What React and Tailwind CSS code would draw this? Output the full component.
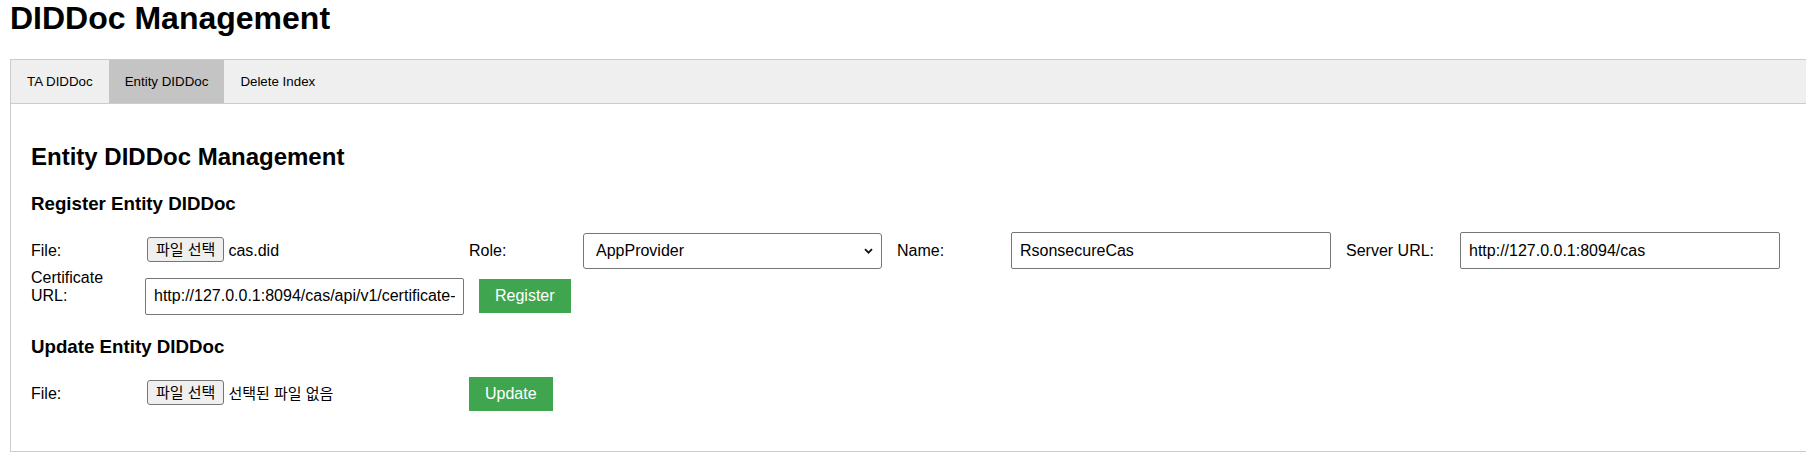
import React from 'react';

const tabs = ['TA DIDDoc', 'Entity DIDDoc', 'Delete Index'];

function Field({ label, children }) {
    return (
        <div className="flex gap-[14px] [align-items:last_baseline]">
            <label className="w-[100px] text-[16px] leading-[18px]">{label}</label>
            {children}
        </div>
    );
}

function FilePicker({ name, nameClass = 'text-[16px]' }) {
    return (
        <div className="w-[309px] pl-[2px] text-[16px] leading-[18px] whitespace-nowrap">
            <span className="inline-block align-[1px] h-[25px] mr-[4px] px-[8px] border border-[#767676] rounded-[3px] bg-[#efefef] text-[15px] leading-[23px]">
                파일 선택
            </span>
            <span className={nameClass}>{name}</span>
        </div>
    );
}

function TextInput({ value, width = 'w-[320px]' }) {
    return (
        <input
            readOnly
            value={value}
            className={`${width} h-[37px] px-[8px] border border-[#767676] rounded-[2px] bg-white text-[16px] leading-[19px] outline-none`}
        />
    );
}

export default function App() {
    return (
        <div className="w-[1806px] h-[471px] overflow-hidden bg-white text-black font-['Liberation_Sans','Noto_Sans_CJK_KR',sans-serif]">
            <div className="pl-[10px]">
                <h1 className="text-[32px] font-bold leading-[36px] mb-[23px]">DIDDoc Management</h1>

                <div className="w-[1800px] border border-[#cccccc]">
                    {/* tabs */}
                    <div className="flex bg-[#efefef] border-b border-[#cccccc]">
                        {tabs.map((t) => (
                            <button
                                key={t}
                                className={
                                    t === 'Entity DIDDoc'
                                        ? 'px-4 py-[14px] text-[13.333px] leading-[15px] bg-[#c4c4c4]'
                                        : 'px-4 py-[14px] text-[13.333px] leading-[15px]'
                                }
                            >
                                {t}
                            </button>
                        ))}
                    </div>

                    <div className="px-[20px] pt-[20px] pb-[40px]">
                        <h2 className="mt-[19px] text-[24px] font-bold leading-[28px]">Entity DIDDoc Management</h2>

                        <h3 className="mt-[22px] text-[18.72px] font-bold leading-[22px]">Register Entity DIDDoc</h3>
                        <div className="mt-[17px] flex flex-wrap gap-x-[15px] [align-items:last_baseline]">
                            <Field label="File:">
                                <FilePicker name="cas.did" />
                            </Field>
                            <Field label="Role:">
                                <div className="relative w-[299px]">
                                    <select
                                        defaultValue="AppProvider"
                                        className="appearance-none w-full h-[36px] pl-[12px] pr-[28px] border border-[#767676] rounded-[3px] bg-white text-[16px] leading-[18px] outline-none"
                                    >
                                        <option>AppProvider</option>
                                        <option>Issuer</option>
                                        <option>Verifier</option>
                                    </select>
                                    <svg
                                        className="absolute right-[9px] top-[15px] pointer-events-none"
                                        width="9"
                                        height="6"
                                        viewBox="0 0 9 6"
                                        fill="none"
                                    >
                                        <path d="M1 1.2 4.5 4.7 8 1.2" stroke="#111" strokeWidth="1.8" />
                                    </svg>
                                </div>
                            </Field>
                            <Field label="Name:">
                                <TextInput value="RsonsecureCas" />
                            </Field>
                            <Field label="Server URL:">
                                <TextInput value="http://127.0.0.1:8094/cas" />
                            </Field>
                            <Field label="Certificate URL:">
                                <TextInput value="http://127.0.0.1:8094/cas/api/v1/certificate-vc" width="w-[319px]" />
                            </Field>
                            <button className="px-4 py-2 bg-[#3fa64f] text-white text-[16px] leading-[18px]">Register</button>
                        </div>

                        <h3 className="mt-[21px] text-[18.72px] font-bold leading-[22px]">Update Entity DIDDoc</h3>
                        <div className="mt-[19px] flex flex-wrap gap-x-[15px] [align-items:last_baseline]">
                            <Field label="File:">
                                <FilePicker name="선택된 파일 없음" nameClass="text-[15px]" />
                            </Field>
                            <button className="px-4 py-2 bg-[#3fa64f] text-white text-[16px] leading-[18px]">Update</button>
                        </div>
                    </div>
                </div>
            </div>
        </div>
    );
}
